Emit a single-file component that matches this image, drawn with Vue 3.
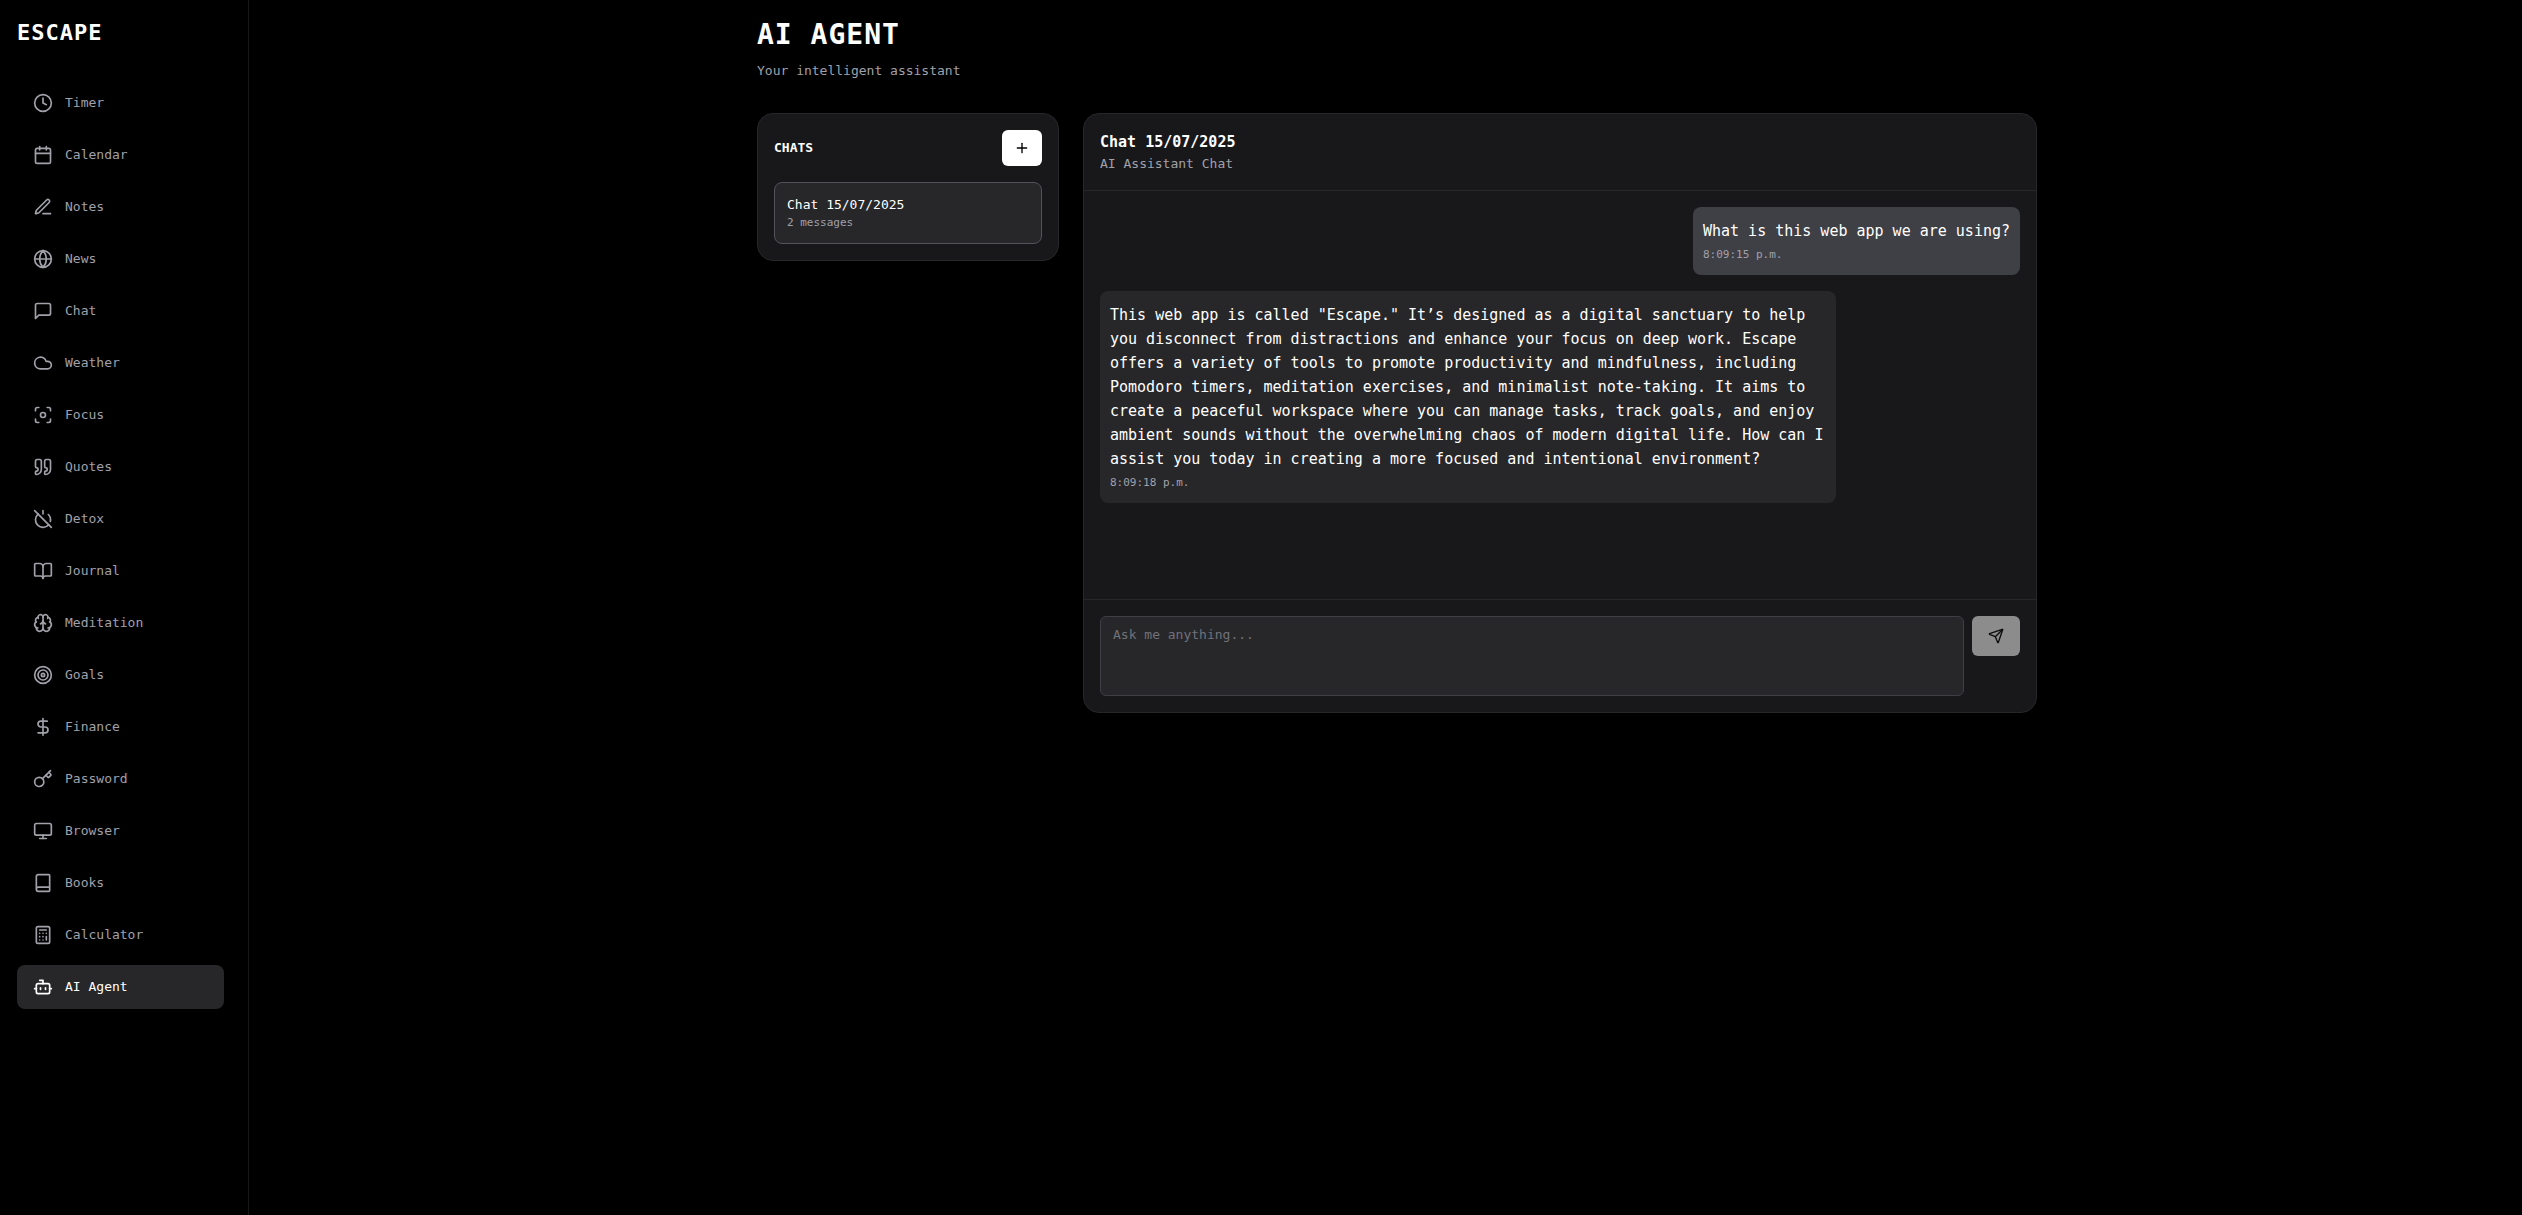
<script setup>
import { ref } from 'vue'

const circle = (cx, cy, r) =>
  `M${cx - r} ${cy}a${r} ${r} 0 1 0 ${2 * r} 0a${r} ${r} 0 1 0 ${-2 * r} 0`

const navItems = [
  { label: 'Timer', paths: [circle(12, 12, 10), 'M12 6v6l4 2'] },
  {
    label: 'Calendar',
    paths: ['M8 2v4', 'M16 2v4', 'M5 4h14a2 2 0 0 1 2 2v14a2 2 0 0 1-2 2H5a2 2 0 0 1-2-2V6a2 2 0 0 1 2-2z', 'M3 10h18'],
  },
  {
    label: 'Notes',
    paths: [
      'M12 20h9',
      'M16.376 3.622a1 1 0 0 1 3.002 3.002L7.368 18.635a2 2 0 0 1-.855.506l-2.872.838a.5.5 0 0 1-.62-.62l.838-2.872a2 2 0 0 1 .506-.854z',
    ],
  },
  { label: 'News', paths: [circle(12, 12, 10), 'M12 2a14.5 14.5 0 0 0 0 20 14.5 14.5 0 0 0 0-20', 'M2 12h20'] },
  { label: 'Chat', paths: ['M21 15a2 2 0 0 1-2 2H7l-4 4V5a2 2 0 0 1 2-2h14a2 2 0 0 1 2 2z'] },
  { label: 'Weather', paths: ['M17.5 19H9a7 7 0 1 1 6.71-9h1.79a4.5 4.5 0 1 1 0 9Z'] },
  {
    label: 'Focus',
    paths: [
      circle(12, 12, 3),
      'M3 7V5a2 2 0 0 1 2-2h2',
      'M17 3h2a2 2 0 0 1 2 2v2',
      'M21 17v2a2 2 0 0 1-2 2h-2',
      'M7 21H5a2 2 0 0 1-2-2v-2',
    ],
  },
  {
    label: 'Quotes',
    paths: [
      'M16 3a2 2 0 0 0-2 2v6a2 2 0 0 0 2 2 1 1 0 0 1 1 1v1a2 2 0 0 1-2 2 1 1 0 0 0-1 1v2a1 1 0 0 0 1 1 6 6 0 0 0 6-6V5a2 2 0 0 0-2-2z',
      'M5 3a2 2 0 0 0-2 2v6a2 2 0 0 0 2 2 1 1 0 0 1 1 1v1a2 2 0 0 1-2 2 1 1 0 0 0-1 1v2a1 1 0 0 0 1 1 6 6 0 0 0 6-6V5a2 2 0 0 0-2-2z',
    ],
  },
  {
    label: 'Detox',
    paths: ['M18.36 6.64A9 9 0 0 1 20.77 15', 'M6.16 6.16a9 9 0 1 0 12.68 12.68', 'M12 2v4', 'm2 2 20 20'],
  },
  {
    label: 'Journal',
    paths: [
      'M12 7v14',
      'M3 18a1 1 0 0 1-1-1V4a1 1 0 0 1 1-1h5a4 4 0 0 1 4 4 4 4 0 0 1 4-4h5a1 1 0 0 1 1 1v13a1 1 0 0 1-1 1h-6a3 3 0 0 0-3 3 3 3 0 0 0-3-3z',
    ],
  },
  {
    label: 'Meditation',
    paths: [
      'M12 18V5',
      'M15 13a4.17 4.17 0 0 1-3-4 4.17 4.17 0 0 1-3 4',
      'M17.598 6.5A3 3 0 1 0 12 5a3 3 0 1 0-5.598 1.5',
      'M17.997 5.125a4 4 0 0 1 2.526 5.77',
      'M18 18a4 4 0 0 0 2-7.464',
      'M19.967 17.483A4 4 0 1 1 12 18a4 4 0 1 1-7.967-.517',
      'M6 18a4 4 0 0 1-2-7.464',
      'M6.003 5.125a4 4 0 0 0-2.526 5.77',
    ],
  },
  { label: 'Goals', paths: [circle(12, 12, 10), circle(12, 12, 6), circle(12, 12, 2)] },
  { label: 'Finance', paths: ['M12 2v20', 'M17 5H9.5a3.5 3.5 0 0 0 0 7h5a3.5 3.5 0 0 1 0 7H6'] },
  {
    label: 'Password',
    paths: [
      'm15.5 7.5 2.3 2.3a1 1 0 0 0 1.4 0l2.1-2.1a1 1 0 0 0 0-1.4L19 4',
      'm21 2-9.6 9.6',
      circle(7.5, 15.5, 5.5),
    ],
  },
  {
    label: 'Browser',
    paths: ['M4 3h16a2 2 0 0 1 2 2v10a2 2 0 0 1-2 2H4a2 2 0 0 1-2-2V5a2 2 0 0 1 2-2z', 'M8 21h8', 'M12 17v4'],
  },
  {
    label: 'Books',
    paths: ['M4 19.5v-15A2.5 2.5 0 0 1 6.5 2H19a1 1 0 0 1 1 1v18a1 1 0 0 1-1 1H6.5a1 1 0 0 1 0-5H20'],
  },
  {
    label: 'Calculator',
    paths: [
      'M6 2h12a2 2 0 0 1 2 2v16a2 2 0 0 1-2 2H6a2 2 0 0 1-2-2V4a2 2 0 0 1 2-2z',
      'M8 6h8',
      'M16 14v4',
      'M16 10h.01',
      'M12 10h.01',
      'M8 10h.01',
      'M12 14h.01',
      'M8 14h.01',
      'M12 18h.01',
      'M8 18h.01',
    ],
  },
  {
    label: 'AI Agent',
    active: true,
    paths: [
      'M12 8V4H8',
      'M6 8h12a2 2 0 0 1 2 2v8a2 2 0 0 1-2 2H6a2 2 0 0 1-2-2v-8a2 2 0 0 1 2-2z',
      'M2 14h2',
      'M20 14h2',
      'M15 13v2',
      'M9 13v2',
    ],
  },
]

const messages = [
  { id: 1, from: 'user', text: 'What is this web app we are using?', time: '8:09:15 p.m.' },
  {
    id: 2,
    from: 'assistant',
    text: 'This web app is called "Escape." It’s designed as a digital sanctuary to help you disconnect from distractions and enhance your focus on deep work. Escape offers a variety of tools to promote productivity and mindfulness, including Pomodoro timers, meditation exercises, and minimalist note-taking. It aims to create a peaceful workspace where you can manage tasks, track goals, and enjoy ambient sounds without the overwhelming chaos of modern digital life. How can I assist you today in creating a more focused and intentional environment?',
    time: '8:09:18 p.m.',
  },
]

const draft = ref('')
</script>

<template>
  <div class="app">
    <aside class="sidebar">
      <div class="brand">ESCAPE</div>
      <nav class="nav">
        <a
          v-for="item in navItems"
          :key="item.label"
          href="#"
          class="nav-link"
          :class="{ active: item.active }"
          :aria-current="item.active ? 'page' : undefined"
        >
          <svg class="icon nav-icon" viewBox="0 0 24 24" aria-hidden="true">
            <path v-for="d in item.paths" :key="d" :d="d" />
          </svg>
          <span>{{ item.label }}</span>
        </a>
      </nav>
    </aside>

    <main class="main">
      <div class="content">
        <header class="page-header">
          <h1>AI AGENT</h1>
          <p>Your intelligent assistant</p>
        </header>

        <div class="columns">
          <section class="card chats">
            <div class="chats-head">
              <h2>CHATS</h2>
              <button type="button" class="new-chat" aria-label="New chat">
                <svg class="icon small-icon" viewBox="0 0 24 24" aria-hidden="true">
                  <path d="M5 12h14" />
                  <path d="M12 5v14" />
                </svg>
              </button>
            </div>
            <button type="button" class="chat-item">
              <span class="chat-name">Chat 15/07/2025</span>
              <span class="chat-count">2 messages</span>
            </button>
          </section>

          <section class="card conversation">
            <header class="conversation-head">
              <h2>Chat 15/07/2025</h2>
              <p>AI Assistant Chat</p>
            </header>

            <div class="messages">
              <article v-for="m in messages" :key="m.id" class="bubble" :class="m.from">
                <p class="bubble-text">{{ m.text }}</p>
                <time class="bubble-time">{{ m.time }}</time>
              </article>
            </div>

            <form class="composer" @submit.prevent>
              <textarea v-model="draft" aria-label="Message" placeholder="Ask me anything..."></textarea>
              <button type="submit" class="send" aria-label="Send" :disabled="!draft.trim()">
                <svg class="icon small-icon" viewBox="0 0 24 24" aria-hidden="true">
                  <path d="M14.536 21.686a.5.5 0 0 0 .937-.024l6.5-19a.496.496 0 0 0-.635-.635l-19 6.5a.5.5 0 0 0-.024.937l7.93 3.18a2 2 0 0 1 1.112 1.11z" />
                  <path d="m21.854 2.147-10.94 10.939" />
                </svg>
              </button>
            </form>
          </section>
        </div>
      </div>
    </main>
  </div>
</template>

<style>
body {
  margin: 0;
  background: #000;
}
</style>

<style scoped>
.app {
  display: flex;
  gap: 23px;
  min-height: 100vh;
  background: #000;
  color: #fff;
  font-family: Consolas, "DejaVu Sans Mono", monospace;
  font-size: 13px;
  line-height: 20px;
}

.app *,
.app {
  box-sizing: border-box;
}

h1,
h2,
p {
  margin: 0;
}

button,
textarea {
  font: inherit;
  color: inherit;
}

.icon {
  flex: none;
  fill: none;
  stroke: currentColor;
  stroke-width: 2;
  stroke-linecap: round;
  stroke-linejoin: round;
}

.nav-icon {
  width: 20px;
  height: 20px;
}

.small-icon {
  width: 16px;
  height: 16px;
}

.sidebar {
  flex: none;
  width: 249px;
  padding: 17px 24px 17px 17px;
  border-right: 1px solid #18181b;
}

.brand {
  font-size: 22px;
  font-weight: 700;
  letter-spacing: 1px;
  line-height: 32px;
}

.nav {
  display: flex;
  flex-direction: column;
  gap: 8px;
  margin-top: 32px;
}

.nav-link {
  display: flex;
  align-items: center;
  gap: 12px;
  height: 44px;
  padding: 0 16px;
  border-radius: 8px;
  color: #a1a1aa;
  text-decoration: none;
}

.nav-link.active {
  background: #27272a;
  color: #fff;
}

.main {
  flex: 1;
  min-width: 0;
}

.content {
  max-width: 1280px;
  margin: 0 auto;
  padding: 17px 0;
}

.page-header h1 {
  font-size: 28px;
  font-weight: 700;
  letter-spacing: 1px;
  line-height: 36px;
}

.page-header p {
  margin-top: 8px;
  color: #a1a1aa;
}

.columns {
  display: grid;
  grid-template-columns: repeat(4, minmax(0, 1fr));
  align-items: start;
  gap: 24px;
  margin-top: 32px;
}

.card {
  background: #18181b;
  border: 1px solid #27272a;
  border-radius: 16px;
}

.chats {
  padding: 16px;
}

.chats-head {
  display: flex;
  align-items: center;
  justify-content: space-between;
  margin-bottom: 16px;
}

.chats-head h2 {
  font-size: 13px;
  font-weight: 700;
}

.new-chat,
.send {
  display: flex;
  align-items: center;
  justify-content: center;
  flex: none;
  padding: 0;
  border: 0;
  border-radius: 6px;
  background: #fff;
  color: #000;
}

.new-chat {
  width: 40px;
  height: 36px;
}

.chat-item {
  display: flex;
  flex-direction: column;
  width: 100%;
  padding: 12px;
  border: 1px solid #52525b;
  border-radius: 8px;
  background: #27272a;
  text-align: left;
}

.chat-count {
  color: #a1a1aa;
  font-size: 11px;
  line-height: 16px;
}

.conversation {
  grid-column: span 3;
  display: flex;
  flex-direction: column;
  min-height: 600px;
}

.conversation-head {
  padding: 16px;
  border-bottom: 1px solid #27272a;
}

.conversation-head h2 {
  font-size: 15px;
  font-weight: 700;
  line-height: 24px;
}

.conversation-head p {
  color: #a1a1aa;
}

.messages {
  flex: 1;
  display: flex;
  flex-direction: column;
  gap: 16px;
  padding: 16px;
}

.bubble {
  max-width: 80%;
  padding: 12px 10px;
  border-radius: 8px;
}

.bubble.user {
  align-self: flex-end;
  background: #3f3f46;
}

.bubble.assistant {
  align-self: flex-start;
  background: #27272a;
}

.bubble-text {
  font-size: 15px;
  line-height: 24px;
}

.bubble-time {
  display: block;
  margin-top: 4px;
  color: #a1a1aa;
  font-size: 11px;
  line-height: 16px;
}

.composer {
  display: flex;
  align-items: flex-start;
  gap: 8px;
  padding: 16px;
  border-top: 1px solid #27272a;
}

.composer textarea {
  flex: 1;
  min-width: 0;
  height: 80px;
  padding: 8px 12px;
  border: 1px solid #3f3f46;
  border-radius: 6px;
  background: #27272a;
  resize: none;
  outline: none;
}

.composer textarea::placeholder {
  color: #71717a;
}

.send {
  width: 48px;
  height: 40px;
}

.send:disabled {
  opacity: 0.5;
}
</style>
